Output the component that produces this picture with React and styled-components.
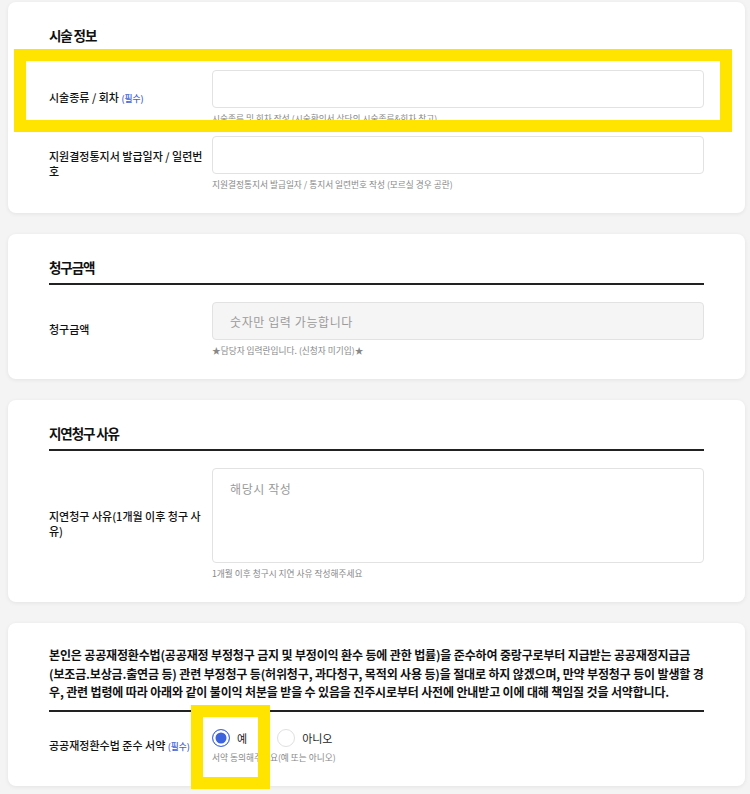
import React from "react";
import styled, { createGlobalStyle } from "styled-components";

const GlobalStyle = createGlobalStyle`
  html, body {
    margin: 0;
    padding: 0;
    background: #f4f4f4;
  }
  body {
    font-family: "Noto Sans CJK KR", "Noto Sans", sans-serif;
    color: #222;
  }
  * {
    box-sizing: border-box;
  }
`;

// statement broken the way the original page wraps it
const statementLines = [
  "본인은 공공재정환수법(공공재정 부정청구 금지 및 부정이익 환수 등에 관한 법률)을 준수하여 중랑구로부터 지급받는 공공재정지급금",
  "(보조금.보상금.출연금 등) 관련 부정청구 등(허위청구, 과다청구, 목적외 사용 등)을 절대로 하지 않겠으며, 만약 부정청구 등이 발생할 경",
  "우, 관련 법령에 따라 아래와 같이 불이익 처분을 받을 수 있음을 진주시로부터 사전에 안내받고 이에 대해 책임질 것을 서약합니다.",
];

function Field({ label, help, children }) {
  return (
    <Row>
      <Label>{label}</Label>
      <Control>
        {children}
        <Help>{help}</Help>
      </Control>
    </Row>
  );
}

export default function App() {
  return (
    <Page>
      <GlobalStyle />

      <Card>
        <Title>시술 정보</Title>
        <Field
          label={
            <>
              시술종류 / 회차 <Required>(필수)</Required>
            </>
          }
          help="시술종류 및 회차 작성 (시술확인서 상단의 시술종류&회차 참고)"
        >
          <TextInput type="text" />
        </Field>
        <Field
          label="지원결정통지서 발급일자 / 일련번호"
          help="지원결정통지서 발급일자 / 통지서 일련번호 작성 (모르실 경우 공란)"
        >
          <TextInput type="text" />
        </Field>
      </Card>

      <Card>
        <Title>청구금액</Title>
        <Field label="청구금액" help="★담당자 입력란입니다. (신청자 미기입)★">
          <TextInput type="text" placeholder="숫자만 입력 가능합니다" disabled $muted />
        </Field>
      </Card>

      <Card>
        <Title>지연청구 사유</Title>
        <Field
          label="지연청구 사유(1개월 이후 청구 사유)"
          help="1개월 이후 청구시 지연 사유 작성해주세요"
        >
          <TextArea placeholder="해당시 작성" />
        </Field>
      </Card>

      <Card>
        <Statement>
          {statementLines.map((line) => (
            <StatementLine key={line}>{line}</StatementLine>
          ))}
        </Statement>
        <Field
          label={
            <>
              공공재정환수법 준수 서약 <Required>(필수)</Required>
            </>
          }
          help="서약 동의해주세요(예 또는 아니오)"
        >
          <RadioGroup>
            <Option>
              <RadioMark $checked />
              예
            </Option>
            <Option>
              <RadioMark />
              아니오
            </Option>
          </RadioGroup>
        </Field>
      </Card>

      {/* yellow annotation frames drawn over the screenshot */}
      <Highlight $top={49} $left={14} $width={718} $height={83} />
      <Highlight $top={705} $left={191} $width={79} $height={84} />
    </Page>
  );
}

const Page = styled.div`
  position: relative;
  display: flex;
  flex-direction: column;
  gap: 21px;
  padding: 2px 5px 20px 8px;
`;

const Card = styled.section`
  background: #fff;
  border-radius: 8px;
  box-shadow: 0 1px 4px rgba(0, 0, 0, 0.07);
  padding: 23px 41px 22px;
`;

const Title = styled.h2`
  margin: 0 0 17px;
  padding-bottom: 6px;
  border-bottom: 2px solid #222;
  font-size: 13.5px;
  font-weight: 700;
  line-height: 20px;
  letter-spacing: -1.1px;
  color: #111;
`;

const Statement = styled.p`
  margin: 0 0 17px;
  padding-bottom: 8px;
  border-bottom: 2px solid #222;
  font-size: 12px;
  font-weight: 700;
  line-height: 18.5px;
  letter-spacing: -0.15px;
  color: #111;
`;

const StatementLine = styled.span`
  display: block;
  white-space: nowrap;
`;

const Row = styled.div`
  display: flex;
  align-items: center;

  & + & {
    margin-top: 11px;
  }
`;

const Label = styled.div`
  width: 158px;
  margin-right: 5px;
  flex-shrink: 0;
  font-size: 11px;
  font-weight: 500;
  line-height: 15px;
  color: #111;
`;

const Required = styled.span`
  font-size: 8.7px;
  color: #3f5fd6;
`;

const Control = styled.div`
  flex: 1;
  min-width: 0;
`;

const TextInput = styled.input`
  display: block;
  width: 100%;
  height: 38px;
  padding: 0 17px;
  border: 1px solid #e2e2e2;
  border-radius: 4px;
  background: ${(p) => (p.$muted ? "#f5f5f5" : "#fff")};
  font-family: inherit;
  font-size: 12px;
  letter-spacing: 0.6px;
  color: #333;
  outline: none;

  &::placeholder {
    color: #9a9a9a;
  }
`;

const TextArea = styled.textarea`
  display: block;
  width: 100%;
  height: 95px;
  padding: 11px 17px;
  border: 1px solid #e2e2e2;
  border-radius: 4px;
  background: #fff;
  resize: none;
  font-family: inherit;
  font-size: 12px;
  letter-spacing: 0.6px;
  color: #333;
  outline: none;

  &::placeholder {
    color: #9a9a9a;
  }
`;

const Help = styled.div`
  margin-top: 5px;
  font-size: 8.7px;
  line-height: 12px;
  color: #888;
`;

const RadioGroup = styled.div`
  display: flex;
  align-items: center;
  gap: 30px;
  height: 18px;
`;

const Option = styled.label`
  display: flex;
  align-items: center;
  gap: 7px;
  font-size: 11px;
  color: #222;
`;

const RadioMark = styled.span`
  width: 18px;
  height: 18px;
  border-radius: 50%;
  border: 1px solid ${(p) => (p.$checked ? "#4a6de0" : "#e0e0e0")};
  background: ${(p) => (p.$checked ? "#3d63dd" : "#fff")};
  box-shadow: ${(p) => (p.$checked ? "inset 0 0 0 2.5px #fff" : "none")};
`;

const Highlight = styled.div`
  position: absolute;
  top: ${(p) => p.$top}px;
  left: ${(p) => p.$left}px;
  width: ${(p) => p.$width}px;
  height: ${(p) => p.$height}px;
  border: 12px solid #ffe400;
  pointer-events: none;
`;
